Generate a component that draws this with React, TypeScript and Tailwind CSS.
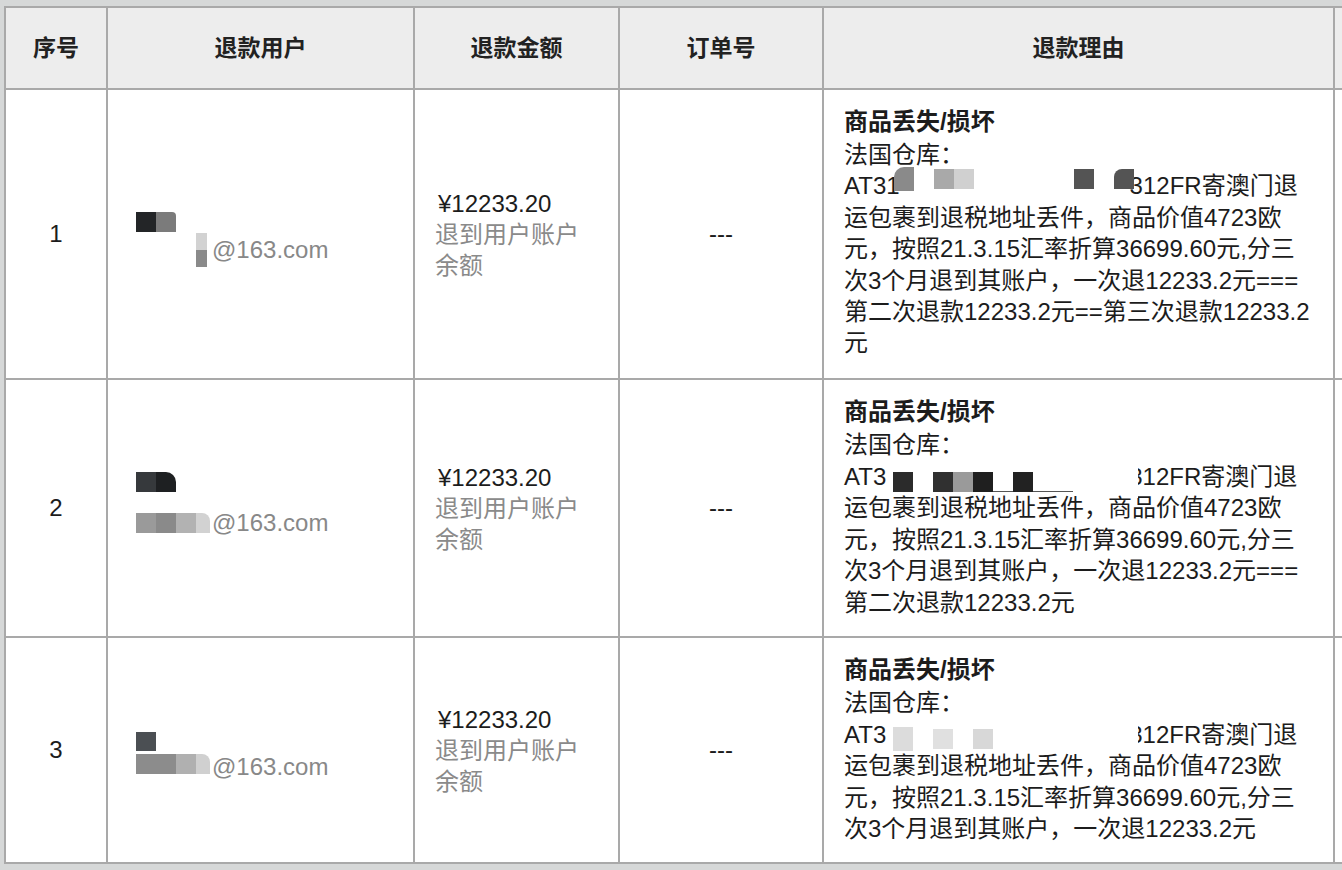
import type { ReactNode } from "react";

type Seg = { cls: string; top?: string; bottom?: string };

type Row = {
  no: number;
  rowH: string;
  userPad: string;
  nameBlocks: Seg[];
  emailGap: string;
  emailBlocks: Seg[];
  emailText: string;
  atPrefix: string;
  atShift: string;
  atBlocks: Seg[];
  lines: string[];
};

const tail = [
  "运包裹到退税地址丢件，商品价值4723欧",
  "元，按照21.3.15汇率折算36699.60元,分三",
];

const rows: Row[] = [
  {
    no: 1,
    rowH: "h-[290px]",
    userPad: "pt-[122px]",
    nameBlocks: [
      { cls: "w-5 h-5 bg-[#232527]" },
      { cls: "w-5 h-5 bg-[#7b7b7b] rounded-tr-[4px]" },
    ],
    emailGap: "mt-[3px]",
    emailBlocks: [
      { cls: "ml-[60px] w-[11px] h-[34px] flex flex-col", top: "bg-[#d2d2d2]", bottom: "bg-[#8a8a8a]" },
    ],
    emailText: "ml-[5px]",
    atPrefix: "AT31",
    atShift: "-translate-y-[7px]",
    atBlocks: [
      { cls: "-ml-[6px] w-5 h-6 bg-[#8a8a8a] rounded-tl-[10px]" },
      { cls: "ml-[20px] w-5 h-5 bg-[#a9a9a9]" },
      { cls: "w-5 h-5 bg-[#d0d0d0]" },
      { cls: "ml-[100px] w-5 h-5 bg-[#545454]" },
      { cls: "ml-[20px] w-5 h-5 bg-[#545454] rounded-tl-[8px] relative z-10 -mr-[4px]" },
    ],
    lines: [
      ...tail,
      "次3个月退到其账户，一次退12233.2元===",
      "第二次退款12233.2元==第三次退款12233.2",
      "元",
    ],
  },
  {
    no: 2,
    rowH: "h-[258px]",
    userPad: "pt-[92px]",
    nameBlocks: [
      { cls: "w-5 h-5 bg-[#36393c]" },
      { cls: "w-5 h-5 bg-[#1e2022] rounded-tr-[10px]" },
    ],
    emailGap: "mt-[16px]",
    emailBlocks: [
      { cls: "w-5 h-5 bg-[#9a9a9a]" },
      { cls: "w-5 h-5 bg-[#8a8a8a]" },
      { cls: "w-5 h-5 bg-[#b2b2b2]" },
      { cls: "w-[14px] h-5 bg-[#d2d2d2] rounded-tr-[8px]" },
    ],
    emailText: "ml-[2px]",
    atPrefix: "AT3",
    atShift: "translate-y-[6px]",
    atBlocks: [
      { cls: "ml-[7px] w-5 h-5 bg-[#2b2b2b]" },
      { cls: "ml-[20px] w-5 h-5 bg-[#303030]" },
      { cls: "w-5 h-5 bg-[#9a9a9a]" },
      { cls: "w-5 h-5 bg-[#1f1f1f]" },
      { cls: "w-5 h-5 border-b border-[#555]" },
      { cls: "w-5 h-5 bg-[#222]" },
      { cls: "w-[40px] h-5 border-b border-[#555]" },
      { cls: "ml-[56px] w-[9px] h-8 bg-white relative z-10 -mr-[9px]" },
    ],
    lines: [...tail, "次3个月退到其账户，一次退12233.2元===", "第二次退款12233.2元"],
  },
  {
    no: 3,
    rowH: "h-[226px]",
    userPad: "pt-[94px]",
    nameBlocks: [{ cls: "w-5 h-[19px] bg-[#4b4f53]" }],
    emailGap: "mt-0",
    emailBlocks: [
      { cls: "self-start mt-[2px] w-[40px] h-5 bg-[#8c8c8c]" },
      { cls: "self-start mt-[2px] w-5 h-5 bg-[#b0b0b0]" },
      { cls: "self-start mt-[2px] w-[14px] h-5 bg-[#d0d0d0] rounded-tr-[8px]" },
    ],
    emailText: "ml-[2px]",
    atPrefix: "AT3",
    atShift: "translate-y-[5px]",
    atBlocks: [
      { cls: "ml-[7px] w-5 h-6 bg-[#dcdcdc]" },
      { cls: "ml-[20px] w-5 h-5 bg-[#e0e0e0]" },
      { cls: "ml-[20px] w-5 h-5 bg-[#d8d8d8]" },
      { cls: "ml-[136px] w-[9px] h-8 bg-white relative z-10 -mr-[9px]" },
    ],
    lines: [...tail, "次3个月退到其账户，一次退12233.2元"],
  },
];

function Blocks({ segs, shift }: { segs: Seg[]; shift?: string }) {
  return (
    <>
      {segs.map((s, i) =>
        s.top ? (
          <span key={i} className={`${s.cls} shrink-0 ${shift ?? ""}`}>
            <span className={`flex-1 ${s.top}`} />
            <span className={`flex-1 ${s.bottom}`} />
          </span>
        ) : (
          <span key={i} className={`${s.cls} shrink-0 ${shift ?? ""}`} />
        ),
      )}
    </>
  );
}

function Th({ children }: { children?: ReactNode }) {
  return (
    <th className="h-[82px] border-r-2 border-b-2 border-[#a9a9a9] bg-[#ededed] text-center align-middle text-[23px] font-bold text-[#222]">
      {children}
    </th>
  );
}

const cell = "border-r-2 border-b-2 border-[#a9a9a9] bg-white";

export default function App() {
  return (
    <div className="h-[870px] w-full overflow-hidden bg-[#d6d8d8] pt-[6px] pl-[4px] font-['Liberation_Sans','Noto_Sans_CJK_SC',sans-serif] text-[24px] text-[#1c1c1c]">
      <table className="w-[1631px] table-fixed border-separate border-spacing-0 border-l-2 border-t-2 border-[#a9a9a9]">
        <colgroup>
          <col className="w-[102px]" />
          <col className="w-[307px]" />
          <col className="w-[205px]" />
          <col className="w-[204px]" />
          <col className="w-[511px]" />
          <col className="w-[300px]" />
        </colgroup>
        <thead>
          <tr>
            <Th>序号</Th>
            <Th>退款用户</Th>
            <Th>退款金额</Th>
            <Th>订单号</Th>
            <Th>退款理由</Th>
            <Th />
          </tr>
        </thead>
        <tbody>
          {rows.map((r) => (
            <tr key={r.no}>
              <td className={`${cell} ${r.rowH} text-center align-middle`}>{r.no}</td>
              <td className={`${cell} align-top pl-[28px] ${r.userPad}`}>
                <div className="flex h-5">
                  <Blocks segs={r.nameBlocks} />
                </div>
                <div className={`flex h-[30px] items-center ${r.emailGap}`}>
                  <Blocks segs={r.emailBlocks} />
                  <span className={`${r.emailText} leading-[30px] text-[#888]`}>@163.com</span>
                </div>
              </td>
              <td className={`${cell} align-middle px-[20px] leading-[31px]`}>
                <div className="pl-[3px] text-[#1c1c1c]">¥12233.20</div>
                <div className="text-[#8a8a8a]">退到用户账户余额</div>
              </td>
              <td className={`${cell} text-center align-middle`}>---</td>
              <td className={`${cell} align-top pl-[20px] pt-[15px] whitespace-nowrap`}>
                <div className="font-bold leading-[34px]">商品丢失/损坏</div>
                <div className="leading-[31.4px]">法国仓库：</div>
                <div className="flex items-center leading-[31.4px]">
                  <span>{r.atPrefix}</span>
                  <Blocks segs={r.atBlocks} shift={r.atShift} />
                  <span>312FR寄澳门退</span>
                </div>
                {r.lines.map((l, i) => (
                  <div key={i} className="leading-[31.4px]">
                    {l}
                  </div>
                ))}
              </td>
              <td className={cell} />
            </tr>
          ))}
        </tbody>
      </table>
    </div>
  );
}
